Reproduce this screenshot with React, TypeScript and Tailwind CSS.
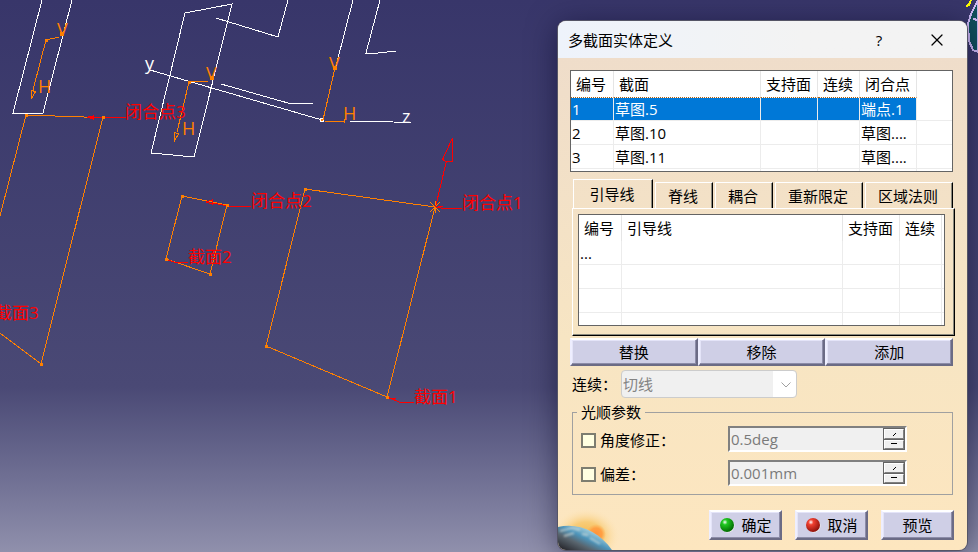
import type { ReactNode } from "react";
import { X } from "lucide-react";

const bevel =
  "border-2 border-t-white border-l-[#eeeeff] border-r-[#6b6b85] border-b-[#6b6b85] bg-[#cfcfe6] shadow-[inset_-1px_-1px_0_#8c8ca8,inset_1px_1px_0_#e4e4f8]";

type Point = [number, number];

const handles: Point[] = [
  [46, 40], [26, 115], [103, 117], [41, 364], [182, 196], [227, 205],
  [166, 259], [210, 274], [305, 189], [266, 346], [387, 397], [189, 82], [335, 68],
];

function Scene() {
  return (
    <svg
      className="absolute top-0 left-0"
      width="978"
      height="552"
      fill="none"
      shapeRendering="crispEdges"
      aria-label="3D"
    >
      <g stroke="#ffffff">
        <path d="M42 0L13 113H43L72 0" />
        <path d="M185 13L232 4L194 157L151 153Z" />
        <path d="M216 18L278 37L288 0" />
        <path d="M353 0L336 66M380 0L366 53H378L396 51" />
        <path d="M150 70L322 120M221 84L288 103H313M350 121.500H375L411 122.500" />
      </g>
      <circle cx="322" cy="120" r="2" fill="#ff8000" stroke="#ffffff" />
      <g stroke="#ff8000">
        <path d="M59 37L46 40L33 90M31.500 99V90.500L35.500 91.500Z" />
        <path d="M208 81L189 82L177 132M174.500 141V132.500L178.500 134Z" />
        <path d="M335 68L323 120M325 121.500H345M344 119V123" />
        <path d="M0 216L26 115L84 117H103L41 364L0 333" />
        <path d="M182 196L227 205L210 274L166 259Z" />
        <path d="M305 189L435 207L387 397L266 346Z" />
        <path d="M430 202L440 212M440 202L430 212M435 201V213" />
      </g>
      <g stroke="#ff0000">
        <path d="M87 117.500H126M88 117L93 116V119Z" />
        <path d="M206 202L212 200V204ZM212 203L232 206.500H251" />
        <path d="M435.500 207L446.500 161M446 161.500L442.500 159.500L452.500 138V161.500Z" />
        <path d="M436 207L444 208.500H462M438 206H443" />
        <path d="M167 260L176 262.500H188" />
        <path d="M388 397L400 402.500H414M389 398H396" />
      </g>
      <g fill="#ff8000">
        {handles.map(([x, y]) => (
          <rect key={`${x}-${y}`} x={x - 1} y={y - 1} width="3" height="3" />
        ))}
        <rect x="60" y="32" width="4" height="4" />
        <rect x="210" y="76" width="4" height="4" />
        <rect x="333" y="66" width="4" height="4" />
      </g>
      <g className="font-['Open_Sans','Noto_Sans_CJK_SC',sans-serif] text-[17px]" fill="#ff0000">
        <text x="125" y="118">闭合点3</text>
        <text x="251" y="207">闭合点2</text>
        <text x="462" y="209">闭合点1</text>
        <text x="188" y="263">截面2</text>
        <text x="414" y="403">截面1</text>
        <text x="-5" y="319">截面3</text>
      </g>
      <g className="font-['Open_Sans',sans-serif] text-[18px]" fill="#ff8000">
        <text x="57" y="36">V</text>
        <text x="38" y="93">H</text>
        <text x="206" y="80">V</text>
        <text x="182" y="135">H</text>
        <text x="329" y="70">V</text>
        <text x="343" y="120">H</text>
      </g>
      <g className="font-['Open_Sans',sans-serif] text-[18px]" fill="#ffffff">
        <text x="145" y="70">y</text>
        <text x="402" y="123">z</text>
      </g>
      <path d="M978 0L971 14L968 24L969 41L973 50L978 52Z" fill="#10505c" stroke="#ccb8f4" strokeWidth="2" />
      <path d="M973 19L978 20" stroke="#ccb8f4" strokeWidth="2" />
      <path d="M971 0L969 5L966 6" stroke="#ffff00" strokeWidth="2" />
    </svg>
  );
}

const headCell = "h-[26px] border-r border-[#e5e5e5] pl-[5px] text-left font-normal whitespace-nowrap";
const bodyCell = "h-6 border-r border-b border-[#ececec] pl-px whitespace-nowrap";

function SectionTable() {
  const rows = [
    ["1", "草图.5", "", "", "端点.1"],
    ["2", "草图.10", "", "", "草图...."],
    ["3", "草图.11", "", "", "草图...."],
  ];
  return (
    <div className="h-[102px] overflow-hidden border border-[#646464] bg-white">
      <table className="w-full table-fixed border-separate border-spacing-0">
        <colgroup>
          <col className="w-[43px]" />
          <col />
          <col className="w-[57px]" />
          <col className="w-[42px]" />
          <col className="w-[57px]" />
          <col className="w-[35px]" />
        </colgroup>
        <thead>
          <tr>
            {["编号", "截面", "支持面", "连续", "闭合点"].map((h) => (
              <th key={h} scope="col" className={headCell}>{h}</th>
            ))}
            <td />
          </tr>
        </thead>
        <tbody>
          {rows.map((row, r) => (
            <tr key={row[0]}>
              {row.map((cell, c) => (
                <td
                  key={c}
                  className={`${bodyCell} ${r === 0 ? "border-t border-t-[#b06010] border-dotted bg-[#0078d7] bg-clip-padding text-white [border-right-style:solid] [border-bottom-style:solid]" : ""}`}
                >
                  {cell}
                </td>
              ))}
              <td className="border-b border-[#ececec]" />
            </tr>
          ))}
          <tr>
            {["a", "b", "c", "d", "e"].map((k) => (
              <td key={k} className="h-6 border-r border-[#ececec]" />
            ))}
            <td />
          </tr>
        </tbody>
      </table>
    </div>
  );
}

function GuideTable() {
  return (
    <div className="h-28 overflow-hidden border border-[#646464] bg-white">
      <table className="w-full table-fixed border-separate border-spacing-0">
        <colgroup>
          <col className="w-[43px]" />
          <col />
          <col className="w-[57px]" />
          <col className="w-[42px]" />
          <col className="w-[2px]" />
        </colgroup>
        <thead>
          <tr>
            {["编号", "引导线", "支持面", "连续"].map((h) => (
              <th key={h} scope="col" className={headCell}>{h}</th>
            ))}
            <td />
          </tr>
        </thead>
        <tbody>
          {["...", "", "", ""].map((mark, r) => (
            <tr key={r}>
              <td className={bodyCell}>{mark}</td>
              <td className={bodyCell} />
              <td className={bodyCell} />
              <td className={bodyCell} />
              <td className="border-b border-[#ececec]" />
            </tr>
          ))}
        </tbody>
      </table>
    </div>
  );
}

function Tabs() {
  const tab = "border-t border-l border-r border-t-white border-l-white border-r-black pr-0.5 shadow-[inset_-1px_0_0_#8a8a80]";
  return (
    <div role="tablist" className="flex h-[29px] items-end gap-0.5 pl-px">
      <button role="tab" aria-selected="true" className={`${tab} h-[29px] w-20`}>引导线</button>
      <button role="tab" aria-selected="false" className={`${tab} h-[26px] w-[58px]`}>脊线</button>
      <button role="tab" aria-selected="false" className={`${tab} h-[26px] w-[58px]`}>耦合</button>
      <button role="tab" aria-selected="false" className={`${tab} h-[26px] w-[88px]`}>重新限定</button>
      <button role="tab" aria-selected="false" className={`${tab} h-[26px] w-[88px]`}>区域法则</button>
    </div>
  );
}

function Spinner({ id, label, value }: { id: string; label: string; value: string }) {
  const step = "flex flex-1 items-center justify-center border border-t-white border-l-white border-r-[#808080] border-b-[#808080] bg-[#f0f0f0]";
  return (
    <div className="flex h-[26px] w-[179px] border-2 border-t-[#808080] border-l-[#808080] border-r-white border-b-white bg-[#f0f0f0]">
      <input
        id={id}
        aria-label={label}
        disabled
        defaultValue={value}
        className="min-w-0 flex-1 pl-px text-[#7a7a7a]"
      />
      <div className="flex w-[22px] flex-col gap-px border border-[#646464] bg-[#646464]">
        <button aria-label="+" className={step}>
          <svg width="5" height="4" stroke="#000000" shapeRendering="crispEdges"><path d="M1 4L4 1" /></svg>
        </button>
        <button aria-label="-" className={step}>
          <svg width="6" height="2" fill="#000000"><rect width="6" height="1" /></svg>
        </button>
      </div>
    </div>
  );
}

function OptionRow({ name, label, value }: { name: string; label: string; value: string }) {
  return (
    <div className="flex items-center">
      <label htmlFor={`${name}-on`} className="flex flex-1 items-center gap-1 pt-0.5">
        <input
          id={`${name}-on`}
          type="checkbox"
          className="size-[15px] appearance-none border-2 border-[#7d7d70] bg-[#ffffe1]"
        />
        {label}
      </label>
      <Spinner id={`${name}-value`} label={label} value={value} />
    </div>
  );
}

function Ball({ id, light, dark }: { id: string; light: string; dark: string }) {
  return (
    <svg width="16" height="16" viewBox="0 0 16 16">
      <defs>
        <radialGradient id={id} cx="0.35" cy="0.3" r="0.75">
          <stop offset="0" stopColor="#ffffff" />
          <stop offset="0.25" stopColor={light} />
          <stop offset="1" stopColor={dark} />
        </radialGradient>
      </defs>
      <circle cx="9" cy="9" r="6.500" fill="#f2f2f2" />
      <circle cx="8" cy="8" r="7" fill={`url(#${id})`} />
    </svg>
  );
}

function ActionButton({ children }: { children: ReactNode }) {
  return (
    <button className={`${bevel} flex h-[30px] w-[73px] items-center justify-center gap-1.5`}>
      {children}
    </button>
  );
}

function Planet() {
  return (
    <svg className="absolute bottom-0 left-0" width="70" height="50" viewBox="0 0 70 50">
      <defs>
        <radialGradient id="halo">
          <stop offset="0" stopColor="#f6b84c" />
          <stop offset="0.5" stopColor="#f8cc78" />
          <stop offset="1" stopColor="#fde6bd" stopOpacity="0" />
        </radialGradient>
        <radialGradient id="sun">
          <stop offset="0" stopColor="#ff9238" />
          <stop offset="0.6" stopColor="#ffa044" />
          <stop offset="1" stopColor="#ffb050" stopOpacity="0" />
        </radialGradient>
        <linearGradient id="planet" gradientUnits="userSpaceOnUse" x1="30" y1="25" x2="16" y2="54">
          <stop offset="0" stopColor="#e4efe2" />
          <stop offset="0.15" stopColor="#96c6d8" />
          <stop offset="0.4" stopColor="#4d94ba" />
          <stop offset="0.65" stopColor="#59656e" />
          <stop offset="1" stopColor="#2b2c32" />
        </linearGradient>
        <filter id="cloud"><feGaussianBlur stdDeviation="1" /></filter>
      </defs>
      <ellipse cx="28" cy="36" rx="34" ry="28" fill="url(#halo)" />
      <circle cx="38" cy="34" r="10" fill="url(#sun)" />
      <path d="M0 27C19 22 41 31 54 50H0Z" fill="url(#planet)" />
      <path d="M2 31L14 28L22 30M6 36L16 33M24 34L30 35M32 38L42 44" stroke="#e6e8e2" strokeWidth="2" opacity="0.6" fill="none" filter="url(#cloud)" />
    </svg>
  );
}

function Dialog() {
  return (
    <section
      role="dialog"
      aria-label="多截面实体定义"
      className="relative w-[409px] overflow-hidden rounded-lg bg-linear-to-b from-[#eedccb] via-[#f7e5c3] via-60% to-[#fde6bf] shadow-[0_0_0_1px_#555566,0_4px_30px_#00002080]"
    >
      <Planet />
      <header className="flex h-[37px] items-center bg-linear-to-r from-[#eef3fb] to-[#f3f3f3] to-60% pl-2.5">
        <h1 className="flex-1">多截面实体定义</h1>
        <button aria-label="帮助" className="w-8">?</button>
        <button aria-label="关闭" className="mr-3 ml-6 flex w-9 justify-center">
          <X size={20} strokeWidth={1.5} />
        </button>
      </header>
      <div className="relative pt-3 pr-3.5 pb-2.5 pl-3">
        <SectionTable />
        <div className="-mr-0.5 pt-[7px] pl-0.5">
          <Tabs />
          <div role="tabpanel" className="border border-t-white border-l-white border-r-black border-b-black pt-[5px] pr-[9px] pb-[9px] pl-[5px] shadow-[inset_-1px_-1px_0_#8a8a80]">
            <GuideTable />
          </div>
        </div>
        <div className="grid grid-cols-3 pt-0.5">
          <button className={`${bevel} h-7`}>替换</button>
          <button className={`${bevel} h-7`}>移除</button>
          <button className={`${bevel} h-7`}>添加</button>
        </div>
        <div className="flex items-center pt-1 pl-0.5">
          <label htmlFor="continuity" className="w-[49px]">连续：</label>
          <div className="relative">
            <select
              id="continuity"
              disabled
              className="h-7 w-44 appearance-none rounded-sm border border-[#cccccc] bg-linear-to-r from-[#f0f0f0] from-87% to-white to-87% pl-px text-[#838383] opacity-100"
            >
              <option>切线</option>
            </select>
            <svg className="pointer-events-none absolute top-3 right-1.5" width="10" height="6" fill="none" stroke="#a0a0a0">
              <path d="M0.500 0.500L5 5L9.500 0.500" />
            </svg>
          </div>
        </div>
        <fieldset className="mt-1 ml-0.5 h-[93px] border border-[#a0a0a0] pr-[45px] pl-2">
          <legend className="-ml-1 px-1 leading-5">光顺参数</legend>
          <div className="flex flex-col gap-2 pt-1">
            <OptionRow name="angle" label="角度修正：" value="0.5deg" />
            <OptionRow name="deviation" label="偏差：" value="0.001mm" />
          </div>
        </fieldset>
        <div className="-mr-px flex justify-end gap-[13px] pt-[15px]">
          <ActionButton><Ball id="ok" light="#20c820" dark="#006400" />确定</ActionButton>
          <ActionButton><Ball id="cancel" light="#f04030" dark="#8a0e08" />取消</ActionButton>
          <ActionButton>预览</ActionButton>
        </div>
      </div>
    </section>
  );
}

export default function App() {
  return (
    <main className="relative flex min-h-screen items-start justify-end overflow-hidden bg-linear-to-b from-[#38366a] via-[#4a4975] via-70% to-[#9090ac] pt-[21px] pr-[11px] font-['Open_Sans','Noto_Sans_CJK_SC',sans-serif] text-[15px] leading-5 text-black">
      <Scene />
      <Dialog />
    </main>
  );
}
